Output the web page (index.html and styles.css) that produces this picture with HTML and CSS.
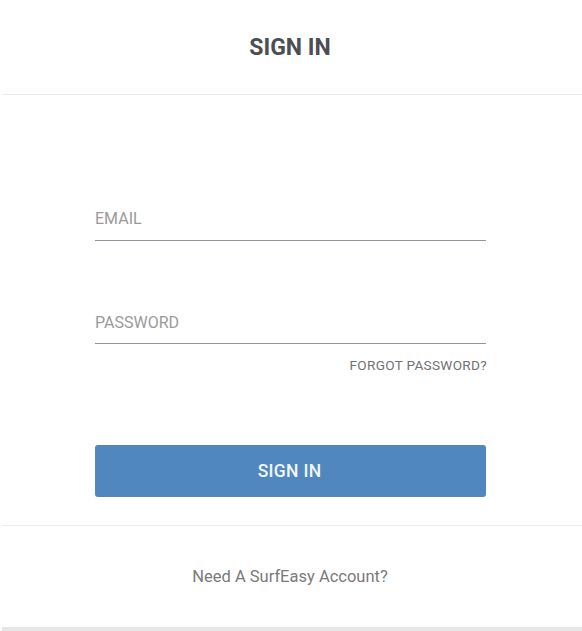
FILE: index.html
```html
<!DOCTYPE html>
<html>
<head>
<meta charset="utf-8">
<link rel="stylesheet" href="styles.css">
</head>
<body>
<div class="page">
  <header class="header"><h1 class="title">SIGN IN</h1></header>
  <main class="form">
    <div class="field field-email"><span class="label">EMAIL</span></div>
    <div class="field field-password"><span class="label">PASSWORD</span></div>
    <div class="forgot-row"><a class="forgot">FORGOT PASSWORD?</a></div>
    <button class="btn">SIGN IN</button>
  </main>
  <footer class="footer"><span class="footer-text">Need A SurfEasy Account?</span></footer>
  <div class="bottom-band"></div>
</div>
</body>
</html>
```
FILE: styles.css
```css
html, body {
  margin: 0;
  padding: 0;
  background: #ffffff;
  font-family: Roboto, "Liberation Sans", Arial, sans-serif;
}
.page {
  margin-left: 2px;
  display: flex;
  flex-direction: column;
  height: 631px;
}
.header {
  height: 94px;
  border-bottom: 1px solid #ececec;
  display: flex;
  align-items: center;
  justify-content: center;
  padding-right: 4px;
}
.title {
  margin: 0;
  font-size: 23px;
  font-weight: 700;
  color: #4b4e52;
  letter-spacing: 0;
  padding-top: 1px;
}
.form {
  padding: 0 96px 0 93px;
  display: flex;
  flex-direction: column;
}
.field {
  border-bottom: 1px solid #8e959c;
  padding-bottom: 12px;
}
.field-email {
  margin-top: 114px;
}
.field-password {
  margin-top: 72px;
  padding-bottom: 11px;
}
.label {
  display: block;
  font-size: 16px;
  line-height: 19px;
  color: #9a9a9a;
}
.forgot-row {
  display: flex;
  justify-content: flex-end;
  margin-top: 13px;
  margin-right: -1px;
}
.forgot {
  font-size: 13.6px;
  line-height: 16px;
  color: #707275;
  letter-spacing: 0.3px;
}
.btn {
  margin-top: 72px;
  height: 52px;
  border: none;
  border-radius: 3px;
  background: #5087be;
  color: #f2f6fa;
  font-family: inherit;
  font-size: 17.5px;
  font-weight: 500;
  letter-spacing: 0.3px;
  padding: 0 2px 0 0;
}
.footer {
  margin-top: 28px;
  border-top: 1px solid #ececec;
  flex: 1;
  display: flex;
  align-items: center;
  justify-content: center;
  padding-right: 4px;
}
.footer-text {
  font-size: 16.5px;
  color: #7a7a7a;
}
.bottom-band {
  height: 4px;
  background: #e6e6e6;
}
```
